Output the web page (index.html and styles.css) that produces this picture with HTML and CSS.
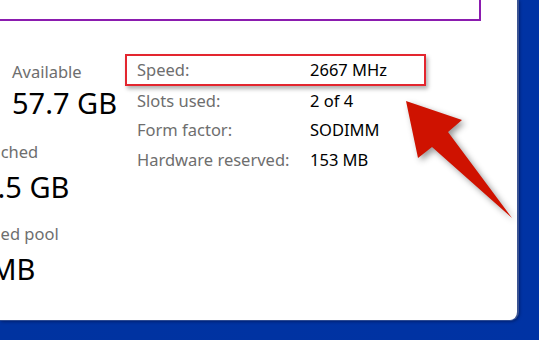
FILE: index.html
```html
<!DOCTYPE html>
<html>
<head>
<meta charset="utf-8">
<link rel="stylesheet" href="styles.css">
</head>
<body>
<div class="window">
  <div class="topbox"></div>
  <div class="content">
    <div class="stats">
      <div class="stat-row r1">
        <div class="stat first"><div class="lbl">In use (Compressed)</div><div class="val">6.2 GB (0 MB)</div></div>
        <div class="stat"><div class="lbl">Available</div><div class="val">57.7 GB</div></div>
      </div>
      <div class="stat-row r2">
        <div class="stat first"><div class="lbl">Committed</div><div class="val tall">7.9/68.9 GB</div></div>
        <div class="stat"><div class="lbl">Cached</div><div class="val tall">1.5 GB</div></div>
      </div>
      <div class="stat-row r3">
        <div class="stat first"><div class="lbl">Paged pool</div><div class="val tall">412 MB</div></div>
        <div class="stat"><div class="lbl">Non-paged pool</div><div class="val tall">318 MB</div></div>
      </div>
    </div>
    <div class="details">
      <div class="drow hl"><span class="k">Speed:</span><span class="v">2667 MHz</span></div>
      <div class="drow"><span class="k">Slots used:</span><span class="v">2 of 4</span></div>
      <div class="drow"><span class="k">Form factor:</span><span class="v">SODIMM</span></div>
      <div class="drow"><span class="k">Hardware reserved:</span><span class="v">153 MB</span></div>
    </div>
  </div>
  <svg class="arrow" width="539" height="340" viewBox="0 0 539 340">
    <polygon points="406,101 462,120 448,132 512,218 432,147 418,158" fill="#cf1200"/>
  </svg>
</div>
</body>
</html>
```
FILE: styles.css
```css
html, body {
  margin: 0;
  padding: 0;
}
body {
  width: 539px;
  height: 340px;
  overflow: hidden;
  background: linear-gradient(90deg, #0033a0 0%, #0033a4 100%);
  font-family: "Noto Sans", "Open Sans", sans-serif;
}
.window {
  position: relative;
  width: 517px;
  height: 320px;
  background: #fff;
  border-right: 2px solid #3a5392;
  border-bottom: 1px solid #2c4a92;
  border-bottom-right-radius: 9px;
  box-shadow: 1px 1px 3px rgba(0, 0, 30, 0.35);
  overflow: hidden;
}
.topbox {
  width: 479px;
  height: 19px;
  border-right: 2px solid #8b1caf;
  border-bottom: 2px solid #8b1caf;
}
.content {
  display: flex;
  margin-top: 33px;
}
.stats {
  width: 345px;
  margin-left: -220px;
  flex: none;
  padding-top: 7px;
}
.stat-row {
  display: flex;
}
.r1 .val { margin-top: 1px; }
.r2 { margin-top: 19px; }
.r3 { margin-top: 17px; }
.stat.first { flex: none; }
.r1 .first { width: 232px; }
.r2 .first { width: 201px; }
.r3 .first { width: 153px; }
.lbl {
  font-size: 16.5px;
  line-height: 22px;
  color: #6e6e6e;
  white-space: nowrap;
}
.val {
  font-size: 29px;
  line-height: 38px;
  color: #000;
  white-space: nowrap;
}
.val.tall { margin-top: 5px; }
.details {
  width: 301px;
  flex: none;
}
.drow {
  display: flex;
  height: 29.6px;
  align-items: center;
  padding-left: 12px;
  font-size: 16.5px;
  line-height: 22px;
  white-space: nowrap;
}
.drow.hl {
  box-sizing: border-box;
  height: 32px;
  padding-left: 10px;
  border: 2px solid #e3262f;
  box-shadow: 2px 3px 4px rgba(0, 0, 0, 0.3);
}
.k {
  width: 173px;
  flex: none;
  color: #6e6e6e;
}
.v {
  color: #000;
}
.arrow {
  position: absolute;
  left: 0;
  top: 0;
  pointer-events: none;
  filter: drop-shadow(3px 3px 3px rgba(0, 0, 0, 0.4));
}
```
